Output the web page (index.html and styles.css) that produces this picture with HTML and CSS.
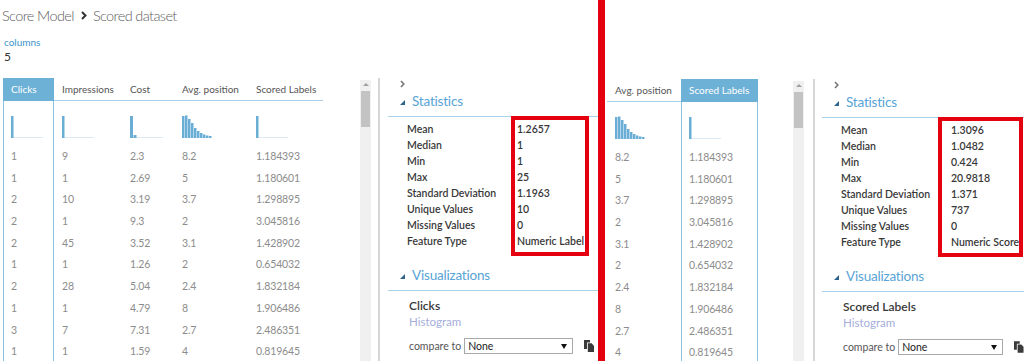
FILE: index.html
```html
<!DOCTYPE html>
<html>
<head>
<meta charset="utf-8">
<title>Score Model - Scored dataset</title>
<link rel="stylesheet" href="styles.css">
</head>
<body>
<div class="shot shot-left">
  <div class="crumb">
    <span>Score Model</span>
    <svg class="crumb-sep" width="6" height="9" viewBox="0 0 6 9"><polyline points="1,1 4.5,4.5 1,8" fill="none" stroke="#333" stroke-width="2"/></svg>
    <span>Scored dataset</span>
  </div>
  <div class="meta-label">columns</div>
  <div class="meta-value">5</div>
  <div class="main">
    <div class="table-area table-area-left">
      <div class="col col-sel w51">
        <div class="col-head">Clicks</div>
        <div class="col-hist"><svg width="34" height="24" viewBox="0 0 34 24"><rect x="0" y="23" width="32" height="1" fill="#dbeaf4"/><rect x="0" y="2" width="2.5" height="22" fill="#6aaed6"/></svg></div>
        <div class="cell">1</div><div class="cell">1</div><div class="cell">2</div><div class="cell">2</div><div class="cell">2</div><div class="cell">1</div><div class="cell">2</div><div class="cell">1</div><div class="cell">3</div><div class="cell">1</div>
      </div>
      <div class="col w68">
        <div class="col-head">Impressions</div>
        <div class="col-hist"><svg width="34" height="24" viewBox="0 0 34 24"><rect x="0" y="23" width="32" height="1" fill="#dbeaf4"/><rect x="0" y="2" width="2.5" height="22" fill="#6aaed6"/></svg></div>
        <div class="cell">9</div><div class="cell">1</div><div class="cell">10</div><div class="cell">1</div><div class="cell">45</div><div class="cell">1</div><div class="cell">28</div><div class="cell">1</div><div class="cell">7</div><div class="cell">1</div>
      </div>
      <div class="col w52">
        <div class="col-head">Cost</div>
        <div class="col-hist"><svg width="34" height="24" viewBox="0 0 34 24"><rect x="0" y="23" width="33" height="1" fill="#dbeaf4"/><rect x="0" y="2" width="3" height="22" fill="#6aaed6"/><rect x="3.5" y="21" width="3" height="3" fill="#6aaed6"/></svg></div>
        <div class="cell">2.3</div><div class="cell">2.69</div><div class="cell">3.19</div><div class="cell">9.3</div><div class="cell">3.52</div><div class="cell">1.26</div><div class="cell">5.04</div><div class="cell">4.79</div><div class="cell">7.31</div><div class="cell">1.59</div>
      </div>
      <div class="col w74">
        <div class="col-head">Avg. position</div>
        <div class="col-hist"><svg width="34" height="24" viewBox="0 0 34 24"><rect x="0" y="2" width="2.5" height="22" fill="#6aaed6"/><rect x="3" y="1.5" width="2.5" height="22.5" fill="#6aaed6"/><rect x="6" y="5" width="2.5" height="19" fill="#6aaed6"/><rect x="9" y="9" width="2.5" height="15" fill="#6aaed6"/><rect x="12" y="14" width="2.5" height="10" fill="#6aaed6"/><rect x="15" y="17" width="2.5" height="7" fill="#6aaed6"/><rect x="18" y="19" width="2.5" height="5" fill="#6aaed6"/><rect x="21" y="20.5" width="2.5" height="3.5" fill="#6aaed6"/><rect x="24" y="21.5" width="2.5" height="2.5" fill="#6aaed6"/><rect x="27" y="22" width="2.5" height="2" fill="#6aaed6"/></svg></div>
        <div class="cell">8.2</div><div class="cell">5</div><div class="cell">3.7</div><div class="cell">2</div><div class="cell">3.1</div><div class="cell">2</div><div class="cell">2.4</div><div class="cell">8</div><div class="cell">2.7</div><div class="cell">4</div>
      </div>
      <div class="col w75">
        <div class="col-head">Scored Labels</div>
        <div class="col-hist"><svg width="34" height="24" viewBox="0 0 34 24"><rect x="0" y="23" width="32" height="1" fill="#dbeaf4"/><rect x="0" y="2" width="2.5" height="22" fill="#6aaed6"/></svg></div>
        <div class="cell">1.184393</div><div class="cell">1.180601</div><div class="cell">1.298895</div><div class="cell">3.045816</div><div class="cell">1.428902</div><div class="cell">0.654032</div><div class="cell">1.832184</div><div class="cell">1.906486</div><div class="cell">2.486351</div><div class="cell">0.819645</div>
      </div>
    </div>
    <div class="scroll"><div class="scroll-up"></div><div class="scroll-thumb"></div></div>
    <div class="divider divider-left"></div>
    <div class="panel panel-left">
      <div class="chev-row"><svg width="5" height="8" viewBox="0 0 5 8"><polyline points="1,1 3.8,4 1,7" fill="none" stroke="#777" stroke-width="1.6"/></svg></div>
      <div class="sec-head"><span class="tri"></span><span>Statistics</span></div>
      <div class="stats">
        <span>Mean</span><span>1.2657</span>
        <span>Median</span><span>1</span>
        <span>Min</span><span>1</span>
        <span>Max</span><span>25</span>
        <span>Standard Deviation</span><span>1.1963</span>
        <span>Unique Values</span><span>10</span>
        <span>Missing Values</span><span>0</span>
        <span>Feature Type</span><span>Numeric Label</span>
      </div>
      <div class="sec-head sec-vis"><span class="tri"></span><span>Visualizations</span></div>
      <div class="vis">
        <div class="vis-title">Clicks</div>
        <div class="vis-sub">Histogram</div>
        <div class="compare">
          <span>compare to</span>
          <div class="select select-left"><span>None</span><span class="select-arrow"></span></div>
          <svg class="copy" width="10" height="12" viewBox="0 0 10 12"><path d="M0 0H6V2.5H3V9H0Z" fill="#3a3a3a"/><path d="M3.8 3.3H7.6L10 5.7V12H3.8Z" fill="#3a3a3a"/></svg>
        </div>
      </div>
      <div class="note note-left"></div>
    </div>
  </div>
</div>
<div class="redbar"></div>
<div class="shot shot-right">
  <div class="main">
    <div class="table-area table-area-right">
      <div class="col w74">
        <div class="col-head">Avg. position</div>
        <div class="col-hist"><svg width="34" height="24" viewBox="0 0 34 24"><rect x="0" y="2" width="2.5" height="22" fill="#6aaed6"/><rect x="3" y="1.5" width="2.5" height="22.5" fill="#6aaed6"/><rect x="6" y="5" width="2.5" height="19" fill="#6aaed6"/><rect x="9" y="9" width="2.5" height="15" fill="#6aaed6"/><rect x="12" y="14" width="2.5" height="10" fill="#6aaed6"/><rect x="15" y="17" width="2.5" height="7" fill="#6aaed6"/><rect x="18" y="19" width="2.5" height="5" fill="#6aaed6"/><rect x="21" y="20.5" width="2.5" height="3.5" fill="#6aaed6"/><rect x="24" y="21.5" width="2.5" height="2.5" fill="#6aaed6"/><rect x="27" y="22" width="2.5" height="2" fill="#6aaed6"/></svg></div>
        <div class="cell">8.2</div><div class="cell">5</div><div class="cell">3.7</div><div class="cell">2</div><div class="cell">3.1</div><div class="cell">2</div><div class="cell">2.4</div><div class="cell">8</div><div class="cell">2.7</div><div class="cell">4</div>
      </div>
      <div class="col col-sel w77">
        <div class="col-head">Scored Labels</div>
        <div class="col-hist"><svg width="34" height="24" viewBox="0 0 34 24"><rect x="0" y="23" width="32" height="1" fill="#dbeaf4"/><rect x="0" y="2" width="2.5" height="22" fill="#6aaed6"/></svg></div>
        <div class="cell">1.184393</div><div class="cell">1.180601</div><div class="cell">1.298895</div><div class="cell">3.045816</div><div class="cell">1.428902</div><div class="cell">0.654032</div><div class="cell">1.832184</div><div class="cell">1.906486</div><div class="cell">2.486351</div><div class="cell">0.819645</div>
      </div>
    </div>
    <div class="scroll"><div class="scroll-up"></div><div class="scroll-thumb"></div></div>
    <div class="divider divider-right"></div>
    <div class="panel panel-right">
      <div class="chev-row"><svg width="5" height="8" viewBox="0 0 5 8"><polyline points="1,1 3.8,4 1,7" fill="none" stroke="#777" stroke-width="1.6"/></svg></div>
      <div class="sec-head"><span class="tri"></span><span>Statistics</span></div>
      <div class="stats">
        <span>Mean</span><span>1.3096</span>
        <span>Median</span><span>1.0482</span>
        <span>Min</span><span>0.424</span>
        <span>Max</span><span>20.9818</span>
        <span>Standard Deviation</span><span>1.371</span>
        <span>Unique Values</span><span>737</span>
        <span>Missing Values</span><span>0</span>
        <span>Feature Type</span><span>Numeric Score</span>
      </div>
      <div class="sec-head sec-vis"><span class="tri"></span><span>Visualizations</span></div>
      <div class="vis">
        <div class="vis-title">Scored Labels</div>
        <div class="vis-sub">Histogram</div>
        <div class="compare">
          <span>compare to</span>
          <div class="select select-right"><span>None</span><span class="select-arrow"></span></div>
          <svg class="copy" width="10" height="12" viewBox="0 0 10 12"><path d="M0 0H6V2.5H3V9H0Z" fill="#3a3a3a"/><path d="M3.8 3.3H7.6L10 5.7V12H3.8Z" fill="#3a3a3a"/></svg>
        </div>
      </div>
      <div class="note note-right"></div>
    </div>
  </div>
</div>
</body>
</html>
```

FILE: styles.css
```css
* { box-sizing: border-box; margin: 0; padding: 0; }
html, body { width: 1024px; height: 361px; overflow: hidden; background: #fff; }
body { display: flex; font-family: Lato, "Open Sans", sans-serif; color: #444; }

.shot { position: relative; display: flex; flex-direction: column; height: 361px; overflow: hidden; }
.shot-left { width: 598px; flex: none; }
.shot-right { flex: 1; padding-top: 79px; }
.redbar { width: 7px; height: 361px; background: #e5000f; flex: none; }

.crumb { flex: none; display: flex; align-items: center; height: 20px; margin-top: 5px; padding-left: 2px; font-size: 14.5px; font-weight: 300; color: #5e5e5e; letter-spacing: -0.6px; }
.crumb-sep { margin: 0 6px 0 7px; }
.meta-label { flex: none; margin-top: 10px; padding-left: 4px; font-size: 10px; line-height: 14px; color: #3d93cc; }
.meta-value { flex: none; padding-left: 4px; font-size: 12px; line-height: 16px; color: #333; }

.main { display: flex; flex: 1 1 auto; min-height: 0; margin-top: 13px; }
.shot-right .main { margin-top: 0; }

.table-area { display: flex; flex: none; }
.table-area-left { width: 360px; padding-left: 3px; }
.table-area-right { width: 188px; padding-left: 2px; }

.col { display: flex; flex-direction: column; flex: none; }
.w51 { width: 51px; }
.w52 { width: 52px; }
.w68 { width: 68px; }
.w74 { width: 74px; }
.w75 { width: 75px; }
.w77 { width: 77px; }

.col-head { flex: none; height: 23px; line-height: 23px; padding-left: 8px; font-size: 10px; color: #555; white-space: nowrap; box-shadow: inset 0 -1px 0 #a6d0e8; }
.col-hist { flex: none; height: 45px; padding: 13px 0 0 8px; }
.col-hist svg { display: block; }
.cell { flex: none; height: 21.7px; line-height: 21.7px; padding-left: 8px; font-size: 10.5px; letter-spacing: -0.15px; color: #8c8c8c; white-space: nowrap; }

.col-sel { border-left: 1px solid #8cc0df; border-right: 1px solid #8cc0df; }
.col-sel .col-head { background: #6eb1d6; color: #fff; box-shadow: none; margin: 0 -1px; }
.col-sel .col-hist, .col-sel .cell { padding-left: 7px; }

.scroll { width: 11px; flex: none; margin-top: 2px; background: #f0f0f0; display: flex; flex-direction: column; align-items: center; }
.scroll-up { flex: none; width: 0; height: 0; margin-top: 3px; border-left: 3px solid transparent; border-right: 3px solid transparent; border-bottom: 3px solid #a0a0a0; }
.scroll-thumb { flex: none; width: 9px; height: 36px; margin-top: 5px; background: #c3c3c3; }

.divider { width: 2px; flex: none; background: #d6d6d6; }
.divider-left { margin-left: 7px; }
.divider-right { margin-left: 9px; }

.panel { position: relative; flex: 1; display: flex; flex-direction: column; min-width: 0; }
.panel > * { flex: none; }
.panel-left { margin-left: 8px; }
.panel-right { margin-left: 7px; }

.chev-row { height: 11px; padding-left: 12px; display: flex; align-items: center; }
.chev-row svg { display: block; }

.sec-head { display: flex; align-items: center; height: 28px; padding: 0 0 3px 12px; border-bottom: 1px solid #a8d3ea; font-size: 13.5px; color: #58a4d6; letter-spacing: -0.2px; }
.tri { width: 0; height: 0; margin-right: 7px; margin-top: 2px; border-left: 5px solid transparent; border-bottom: 5px solid #2c648c; }
.sec-vis { margin-top: 14px; }

.stats { display: grid; grid-template-columns: 110px auto; padding: 4px 0 0 19px; font-size: 10.5px; line-height: 16px; font-weight: 600; color: #383838; white-space: nowrap; }

.vis { padding-left: 21px; }
.vis-title { margin-top: 7px; font-size: 12px; line-height: 16px; font-weight: 600; color: #383838; white-space: nowrap; }
.vis-sub { font-size: 11.5px; line-height: 16px; color: #a6aedb; }
.compare { display: flex; align-items: center; margin-top: 8px; height: 16px; font-size: 10.5px; color: #555; white-space: nowrap; }
.select { display: flex; align-items: center; justify-content: space-between; height: 16px; margin-left: 3px; padding: 0 5px 0 3px; border: 1px solid #a9a9a9; background: #fff; color: #222; font-size: 10.5px; }
.select-left { width: 109px; }
.select-right { width: 110px; }
.select-arrow { width: 0; height: 0; border-left: 3px solid transparent; border-right: 3px solid transparent; border-top: 5px solid #111; }
.copy { margin-left: 11px; display: block; }

.note { position: absolute; border: 4px solid #e5000f; }
.note-left { left: 123px; top: 38px; width: 78px; height: 140px; }
.note-right { left: 116px; top: 38px; width: 85px; height: 140px; }
```
